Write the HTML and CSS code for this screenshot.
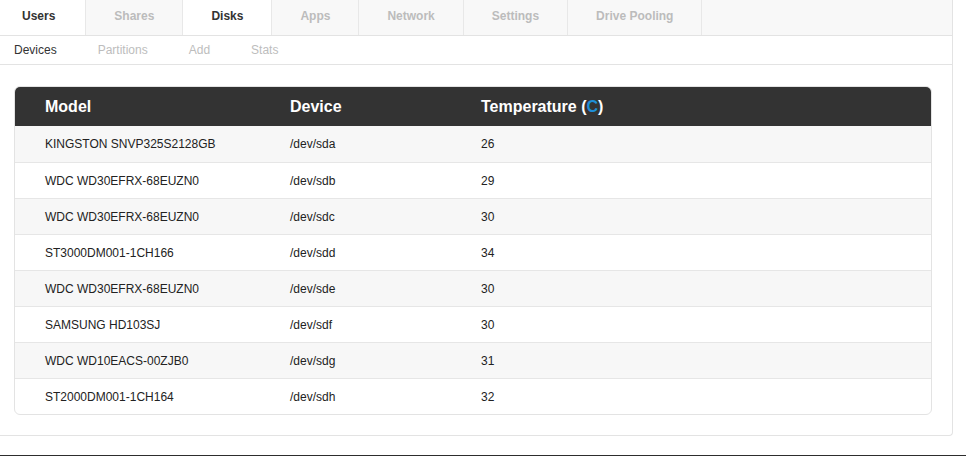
FILE: index.html
```html
<!DOCTYPE html>
<html>
<head>
<meta charset="utf-8">
<link rel="stylesheet" href="styles.css">
</head>
<body>
<div class="panel">
  <nav class="tabs">
    <a class="tab first active">Users</a>
    <a class="tab">Shares</a>
    <a class="tab active">Disks</a>
    <a class="tab">Apps</a>
    <a class="tab">Network</a>
    <a class="tab">Settings</a>
    <a class="tab">Drive Pooling</a>
    <span class="tab-fill"></span>
  </nav>
  <nav class="subnav">
    <a class="sub active">Devices</a>
    <a class="sub">Partitions</a>
    <a class="sub">Add</a>
    <a class="sub">Stats</a>
  </nav>
  <div class="content">
    <div class="table-wrap">
      <table class="disks">
        <colgroup><col class="c1"><col class="c2"><col class="c3"></colgroup>
        <thead>
          <tr><th>Model</th><th>Device</th><th>Temperature (<span class="unit">C</span>)</th></tr>
        </thead>
        <tbody>
          <tr><td>KINGSTON SNVP325S2128GB</td><td>/dev/sda</td><td>26</td></tr>
          <tr><td>WDC WD30EFRX-68EUZN0</td><td>/dev/sdb</td><td>29</td></tr>
          <tr><td>WDC WD30EFRX-68EUZN0</td><td>/dev/sdc</td><td>30</td></tr>
          <tr><td>ST3000DM001-1CH166</td><td>/dev/sdd</td><td>34</td></tr>
          <tr><td>WDC WD30EFRX-68EUZN0</td><td>/dev/sde</td><td>30</td></tr>
          <tr><td>SAMSUNG HD103SJ</td><td>/dev/sdf</td><td>30</td></tr>
          <tr><td>WDC WD10EACS-00ZJB0</td><td>/dev/sdg</td><td>31</td></tr>
          <tr><td>ST2000DM001-1CH164</td><td>/dev/sdh</td><td>32</td></tr>
        </tbody>
      </table>
    </div>
  </div>
</div>
<footer class="footer"></footer>
</body>
</html>
```

FILE: styles.css
```css
html, body {
  margin: 0;
  padding: 0;
  background: #fff;
  font-family: "Liberation Sans", Arial, sans-serif;
  font-size: 12px;
  color: #222;
}

.panel {
  width: 952px;
  border-right: 1px solid #e3e3e3;
  border-bottom: 1px solid #e3e3e3;
  border-bottom-right-radius: 4px;
  padding-bottom: 20px;
}

.tabs {
  display: flex;
  height: 35px;
  border-bottom: 1px solid #e3e3e3;
  background: #f8f8f8;
}

.tab {
  display: flex;
  align-items: center;
  padding: 0 28px 3px 28px;
  border-right: 1px solid #e8e8e8;
  font-weight: bold;
  font-size: 12px;
  color: #bcbcbc;
  background: #f8f8f8;
}

.tab.first {
  padding-left: 22px;
  padding-right: 30px;
}

.tab.active {
  color: #333;
  background: #fff;
}

.tab-fill {
  flex: 1;
}

.subnav {
  display: flex;
  align-items: center;
  height: 28px;
  padding-left: 14px;
  border-bottom: 1px solid #e3e3e3;
}

.sub {
  margin-right: 41px;
  color: #bdbdbd;
  font-size: 12px;
}

.sub.active {
  color: #333;
}

.content {
  padding: 21px 20px 0 14px;
}

.table-wrap {
  border: 1px solid #e3e3e3;
  border-radius: 6px;
  overflow: hidden;
}

.disks {
  width: 100%;
  border-collapse: collapse;
  table-layout: fixed;
}

.disks .c1 { width: 245px; }
.disks .c2 { width: 191px; }

.disks th {
  height: 39px;
  background: #333;
  color: #fff;
  font-size: 16px;
  font-weight: bold;
  text-align: left;
  padding: 0 0 0 30px;
}

.disks th .unit {
  color: #1e8fd8;
}

.disks td {
  height: 35px;
  padding: 0 0 0 30px;
  font-size: 12px;
  color: #222;
  border-top: 1px solid #e6e6e6;
}

.disks tbody tr:first-child td {
  border-top: none;
  height: 36px;
}

.disks tbody tr:nth-child(odd) td {
  background: #f7f7f7;
}

.footer {
  margin-top: 19px;
  height: 2px;
  background: #2d2d2d;
}
```
